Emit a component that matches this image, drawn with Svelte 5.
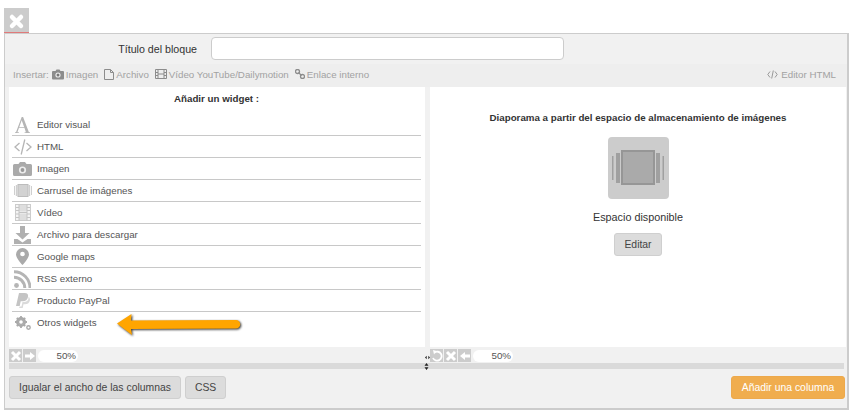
<script>
  const widgets = [
    { id: "a", label: "Editor visual" },
    { id: "html", label: "HTML" },
    { id: "camera", label: "Imagen" },
    { id: "carousel", label: "Carrusel de imágenes" },
    { id: "film", label: "Vídeo" },
    { id: "download", label: "Archivo para descargar" },
    { id: "pin", label: "Google maps" },
    { id: "rss", label: "RSS externo" },
    { id: "paypal", label: "Producto PayPal" },
    { id: "gears", label: "Otros widgets" }
  ];
</script>

<div class="page">
  <button class="close" aria-label="Cerrar">
    <svg width="25" height="24" viewBox="0 0 25 24"><path d="M8 9l9 9M17 9l-9 9" fill="none" stroke="#fff" stroke-width="4.500" stroke-linecap="round"/></svg>
  </button>

  <div class="dialog">
    <div class="title-row">
      <label for="titulo">Título del bloque</label>
      <input id="titulo" type="text" />
    </div>

    <div class="toolbar">
      <div class="insert">
        <span class="lead">Insertar:</span>
        <span class="tool">
          <svg width="12" height="11" viewBox="0 0 12 11"><path d="M1 2h2.500l1-1.500h3l1 1.500H11a1 1 0 0 1 1 1v6.500a1 1 0 0 1-1 1H1a1 1 0 0 1-1-1V3a1 1 0 0 1 1-1z" fill="#8c8c8c"/><circle cx="6" cy="6" r="2.600" fill="#eee"/><circle cx="6" cy="6" r="1.500" fill="#777"/></svg>
          Imagen
        </span>
        <span class="tool">
          <svg width="10" height="11" viewBox="0 0 10 11"><path d="M.5.500h6l3 3v7h-9zM6.500.500v3h3" fill="none" stroke="#8c8c8c"/></svg>
          Archivo
        </span>
        <span class="tool">
          <svg width="12" height="10" viewBox="0 0 12 10"><path d="M.5.500h11v9H.5zM3 .5v9M9 .5v9M3 5h6M.5 3.500H3M.5 6.500H3M9 3.500h2.500M9 6.500h2.500" fill="none" stroke="#8c8c8c"/></svg>
          Vídeo YouTube/Dailymotion
        </span>
        <span class="tool">
          <svg width="10" height="10" viewBox="0 0 10 10"><circle cx="2.500" cy="2.500" r="2" fill="none" stroke="#8c8c8c" stroke-width="1.300"/><circle cx="7.500" cy="7.500" r="2" fill="none" stroke="#8c8c8c" stroke-width="1.300"/><path d="M3.500 3.500l3 3" stroke="#8c8c8c" stroke-width="1.300"/></svg>
          Enlace interno
        </span>
      </div>
      <span class="tool html-link">
        <svg width="11" height="9" viewBox="0 0 11 9"><path d="M3 1.500L.8 4.500 3 7.500M8 1.500l2.200 3L8 7.500M6.300.5L4.700 8.500" fill="none" stroke="#999"/></svg>
        Editor HTML
      </span>
    </div>

    <div class="columns">
      <div class="column">
        <div class="pane left-pane">
          <h3>Añadir un widget :</h3>
          <ul>
            {#each widgets as w}
              <li>
                <span class="icon">
                  {#if w.id === "a"}
                    <svg width="15" height="16" viewBox="0 0 15 16"><path d="M0 16v-.7h1L6.700 0h1.400l5.800 15.300h1.100v.7H9.600v-.7h1.300l-1.500-4.500H4l-1.600 4.500h1.500v.7zM4.300 10h4.800L6.700 3.200z" fill="#b5b5b5"/></svg>
                  {:else if w.id === "html"}
                    <svg width="18" height="16" viewBox="0 0 18 16"><path d="M5.500 4L1 8l4.500 4M12.500 4L17 8l-4.500 4M10.800 .5L7.200 15.500" fill="none" stroke="#b5b5b5" stroke-width="1.300"/></svg>
                  {:else if w.id === "camera"}
                    <svg width="19" height="14" viewBox="0 0 19 14"><path d="M1.500 2h4L7 0h5l1.500 2h4A1.500 1.500 0 0 1 19 3.500v9a1.500 1.500 0 0 1-1.500 1.500h-16A1.500 1.500 0 0 1 0 12.500v-9A1.500 1.500 0 0 1 1.500 2z" fill="#aaa"/><circle cx="9.500" cy="8" r="3.600" fill="#ececec"/><circle cx="9.500" cy="8" r="1.900" fill="#999"/></svg>
                  {:else if w.id === "carousel"}
                    <svg width="18" height="13" viewBox="0 0 18 13"><path d="M0 2h1v9H0zM1.800 1h1.500v11H1.800zM14.700 1h1.500v11h-1.500zM17 2h1v9h-1z" fill="#cfcfcf"/><rect x="4" y=".5" width="10" height="12" fill="#d2d2d2" stroke="#bcbcbc"/></svg>
                  {:else if w.id === "film"}
                    <svg width="16" height="17" viewBox="0 0 16 17"><rect x=".5" y=".5" width="15" height="16" fill="#f4f4f4" stroke="#ccc"/><rect x="4" y="1" width="8" height="6.500" fill="#dedede"/><rect x="4" y="9.500" width="8" height="6.500" fill="#dedede"/><path d="M1 3.500h3M1 6.500h3M1 10h3M1 13.500h3M12 3.500h3M12 6.500h3M12 10h3M12 13.500h3M4 8.500h8M4 .5v16M12 .5v16" stroke="#c4c4c4"/></svg>
                  {:else if w.id === "download"}
                    <svg width="17" height="18" viewBox="0 0 17 18"><path d="M6 0h5v7h4.500l-7 6.500-7-6.500H6z" fill="#b0b0b0"/><path d="M0 13h3.500l5 3.500 5-3.500H17v5H0z" fill="#b0b0b0"/></svg>
                  {:else if w.id === "pin"}
                    <svg width="13" height="17" viewBox="0 0 13 17"><path d="M6.500 0A6.500 6.500 0 0 0 0 6.500C0 10.500 6.500 17 6.500 17S13 10.500 13 6.500A6.500 6.500 0 0 0 6.500 0z" fill="#aaa"/><circle cx="6.500" cy="6" r="2.300" fill="#fff"/></svg>
                  {:else if w.id === "rss"}
                    <svg width="17" height="18" viewBox="0 0 17 18"><circle cx="2.500" cy="15.500" r="2.400" fill="#b5b5b5"/><path d="M0 7.200A10.800 10.800 0 0 1 10.800 18M0 1.800A16 16 0 0 1 16 18" fill="none" stroke="#b5b5b5" stroke-width="3"/></svg>
                  {:else if w.id === "paypal"}
                    <svg width="15" height="15" viewBox="0 0 15 15"><path d="M4 0h5.500C12.500 0 13.500 1.500 13 4 12.500 6.700 10.500 8.300 7.800 8.300H5.700L4.700 13H1z" fill="#c4c4c4"/><path d="M13.400 3.800C14.800 4.800 15.200 6 14.800 7.700 14.300 10 12.300 11.300 10 11.300H8.500L7.700 15H4.200l.3-1.600h2l1-4.300h1.300c3 0 5.300-2 4.600-5.300z" fill="#dadada"/></svg>
                  {:else}
                    <svg width="16" height="14" viewBox="0 0 16 14"><circle cx="6" cy="6" r="3.800" fill="none" stroke="#aaa" stroke-width="2.400"/><path d="M6 0v12M0 6h12M1.800 1.800l8.400 8.400M10.200 1.800l-8.400 8.400" stroke="#aaa" stroke-width="1.800"/><circle cx="6" cy="6" r="1.800" fill="#fff"/><circle cx="13.500" cy="11.500" r="1.700" fill="none" stroke="#aaa" stroke-width="1.400"/></svg>
                  {/if}
                </span>
                <span>{w.label}</span>
              </li>
            {/each}
          </ul>
          <svg class="arrow" width="130" height="26" viewBox="0 0 130 26">
            <path d="M1 11.500L15.500 2 15 8.500 120 8a4 4 0 0 1 0 8.500L15 17l1 6z" fill="#ffa500"/>
          </svg>
        </div>
        <div class="col-tools">
          <span class="mini" aria-hidden="true"><svg width="14" height="14" viewBox="0 0 14 14"><path d="M3 3l8 8M11 3l-8 8" stroke="#fff" stroke-width="3"/></svg></span>
          <span class="mini" aria-hidden="true"><svg width="14" height="14" viewBox="0 0 14 14"><path d="M2 5.500h5V3l5 4-5 4V8.500H2z" fill="#fff"/></svg></span>
          <span class="percent">50%</span>
        </div>
      </div>

      <div class="handle-h">
        <svg width="5" height="5" viewBox="0 0 6 5"><path d="M0 2.500L2 .5v4zM6 2.500L4 .5v4z" fill="#222"/></svg>
      </div>

      <div class="column">
        <div class="pane right-pane">
          <h3>Diaporama a partir del espacio de almacenamiento de imágenes</h3>
          <div class="tile">
            <svg width="54" height="36" viewBox="0 0 54 36">
              <path d="M1 6h1.500v24H1zM5 3h4v30H5zM45 3h4v30h-4zM51.500 6H53v24h-1.500z" fill="#a0a0a0"/>
              <rect x="11" y="1" width="32" height="33" fill="#aaa" stroke="#969696" stroke-width="2"/>
            </svg>
          </div>
          <p>Espacio disponible</p>
          <button class="btn">Editar</button>
        </div>
        <div class="col-tools">
          <span class="mini" aria-hidden="true"><svg width="14" height="14" viewBox="0 0 14 14"><path d="M4.500 3.500A4.500 4.500 0 1 1 3 9" fill="none" stroke="#fff" stroke-width="1.800"/><path d="M3 1l3.500 1L4 5.500z" fill="#fff"/></svg></span>
          <span class="mini" aria-hidden="true"><svg width="14" height="14" viewBox="0 0 14 14"><path d="M3 3l8 8M11 3l-8 8" stroke="#fff" stroke-width="3"/></svg></span>
          <span class="mini" aria-hidden="true"><svg width="14" height="14" viewBox="0 0 14 14"><path d="M12 5.500H7V3L2 7l5 4V8.500h5z" fill="#fff"/></svg></span>
          <span class="percent">50%</span>
        </div>
      </div>
    </div>

    <div class="resize-bar">
      <svg class="handle-v" width="5" height="7" viewBox="0 0 5 7"><path d="M2.500 0L4.500 2.700H.5zM2.500 7L.5 4.300h4z" fill="#222"/></svg>
    </div>

    <div class="actions">
      <div class="actions-left">
        <button class="btn">Igualar el ancho de las columnas</button>
        <button class="btn">CSS</button>
      </div>
      <button class="btn primary">Añadir una columna</button>
    </div>
  </div>
</div>

<style>
  :global(body) {
    background: #fff;
    font-family: "Liberation Sans", Arial, sans-serif;
  }

  .page {
    width: 855px;
    height: 415px;
    box-sizing: border-box;
    padding: 8px 0 0 4px;
    overflow: hidden;
  }

  button {
    font-family: inherit;
  }

  .close {
    display: block;
    width: 25px;
    height: 25px;
    padding: 0;
    border: 0;
    border-bottom: 1px solid #e07a7a;
    background: #ccc;
  }

  .close svg {
    display: block;
  }

  .dialog {
    width: 845px;
    height: 377px;
    box-sizing: border-box;
    border: 1px solid #ccc;
    border-width: 1px 2px 2px 1px;
    background: #f1f1f1;
    padding-top: 3px;
  }

  .title-row {
    display: flex;
    align-items: center;
    height: 23px;
    margin-bottom: 4px;
  }

  .title-row label {
    width: 192px;
    text-align: right;
    font-size: 10.670px;
    color: #333;
  }

  .title-row input {
    width: 353px;
    height: 23px;
    box-sizing: border-box;
    margin-left: 14px;
    border: 1px solid #ccc;
    border-radius: 4px;
    background: #fff;
    padding: 0 6px;
  }

  .toolbar {
    display: flex;
    justify-content: space-between;
    align-items: center;
    height: 23px;
    box-sizing: border-box;
    padding: 0 11px 3px 8px;
    background: #eeeeee;
    font-size: 9.750px;
    color: #a2a2a2;
  }

  .insert {
    display: flex;
    gap: 6px;
    align-items: center;
  }

  .lead {
    margin-right: -3px;
  }

  .tool {
    display: inline-flex;
    align-items: center;
    gap: 2px;
  }

  .html-link {
    gap: 3px;
  }

  .columns {
    display: flex;
    padding-left: 4px;
  }

  .column {
    width: 416px;
  }

  .pane {
    position: relative;
    height: 260px;
    background: #fff;
    box-sizing: border-box;
  }

  h3 {
    margin: 0;
    font-size: 9.750px;
    font-weight: bold;
    color: #333;
    text-align: center;
  }

  .left-pane {
    padding: 6px 4px 0 3px;
  }

  ul {
    list-style: none;
    margin: 10px 0 0;
    padding: 0;
  }

  li {
    display: flex;
    align-items: center;
    height: 21px;
    border-bottom: 1px solid #c8c8c8;
    font-size: 9.750px;
    color: #555;
  }

  li:last-child {
    border-bottom: 0;
  }

  .icon {
    display: flex;
    justify-content: center;
    align-items: center;
    width: 21px;
    height: 21px;
    margin-right: 4px;
    flex: none;
  }

  .arrow {
    position: absolute;
    left: 107px;
    top: 225px;
    overflow: visible;
    filter: drop-shadow(1px 1.500px 1px #333);
  }

  .right-pane {
    display: flex;
    flex-direction: column;
    align-items: center;
    padding-top: 25px;
  }

  .tile {
    display: flex;
    align-items: center;
    justify-content: center;
    width: 61px;
    height: 62px;
    margin-top: 14px;
    border-radius: 4px;
    background: #cccccc;
  }

  .right-pane p {
    margin: 12px 0 10px;
    font-size: 10.800px;
    color: #333;
  }

  .col-tools {
    display: flex;
    align-items: center;
    gap: 1px;
    height: 15px;
    padding-top: 1px;
  }

  .mini {
    display: flex;
    width: 13px;
    height: 13px;
    background: #cccccc;
    overflow: hidden;
  }

  .mini svg {
    flex: none;
    margin: -0.500px;
  }

  .percent {
    width: 40px;
    height: 12px;
    line-height: 12px;
    margin-left: 1px;
    box-sizing: border-box;
    padding-right: 2px;
    background: #fff;
    border-radius: 6px;
    text-align: right;
    font-size: 9.750px;
    color: #555;
  }

  .handle-h {
    display: flex;
    justify-content: center;
    align-items: flex-end;
    width: 5px;
    padding-bottom: 3px;
  }

  .resize-bar {
    position: relative;
    height: 6px;
    margin: 0 3px 0 4px;
    background: #dadada;
    display: flex;
    justify-content: center;
  }

  .handle-v {
    display: block;
  }

  .actions {
    display: flex;
    justify-content: space-between;
    padding: 7px 2px 0 4px;
  }

  .actions-left {
    display: flex;
    gap: 4px;
  }

  .btn {
    height: 23px;
    padding: 0 9px;
    border: 1px solid #cfcfcf;
    border-radius: 3px;
    background: #dcdcdc;
    font-size: 10.400px;
    color: #444;
  }

  .primary {
    width: 114px;
    padding: 0;
    border-color: #eda94c;
    background: #f0ad4e;
    color: #fff;
  }
</style>
